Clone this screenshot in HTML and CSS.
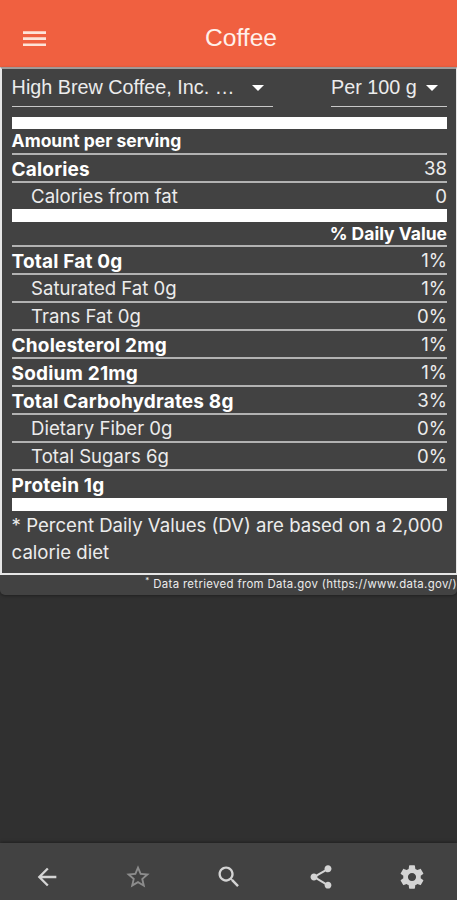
FILE: index.html
```html
<!DOCTYPE html>
<html lang="en">
<head>
<meta charset="utf-8">
<title>Coffee</title>
<link rel="stylesheet" href="styles.css">
</head>
<body>
<header class="toolbar">
  <svg class="menu" viewBox="0 0 24 16"><path d="M0 0h24v2.7H0zM0 6.3h24V9H0zM0 12.6h24v2.7H0z"/></svg>
  <h1>Coffee</h1>
</header>
<main class="card">
  <section class="label">
    <div class="selects">
      <div class="select food"><span>High Brew Coffee, Inc. …</span><i class="caret"></i></div>
      <div class="select unit"><span>Per 100 g</span><i class="caret"></i></div>
    </div>
    <div class="bar"></div>
    <div class="row small first"><b>Amount per serving</b></div>
    <div class="row"><b>Calories</b><span>38</span></div>
    <div class="row sub fat"><span>Calories from fat</span><span>0</span></div>
    <div class="bar second"></div>
    <div class="row small daily"><b>% Daily Value</b></div>
    <div class="row"><b>Total Fat 0g</b><span>1%</span></div>
    <div class="row sub"><span>Saturated Fat 0g</span><span>1%</span></div>
    <div class="row sub"><span>Trans Fat 0g</span><span>0%</span></div>
    <div class="row"><b>Cholesterol 2mg</b><span>1%</span></div>
    <div class="row"><b>Sodium 21mg</b><span>1%</span></div>
    <div class="row"><b>Total Carbohydrates 8g</b><span>3%</span></div>
    <div class="row sub"><span>Dietary Fiber 0g</span><span>0%</span></div>
    <div class="row sub"><span>Total Sugars 6g</span><span>0%</span></div>
    <div class="row last"><b>Protein 1g</b></div>
    <div class="bar second"></div>
    <p class="note">* Percent Daily Values (DV) are based on a 2,000 calorie diet</p>
  </section>
  <p class="source"><sup>*</sup> Data retrieved from Data.gov (https://www.data.gov/)</p>
</main>
<nav class="tabs">
  <svg viewBox="0 0 24 24"><path d="M20 11H7.83l5.59-5.59L12 4l-8 8 8 8 1.41-1.41L7.83 13H20v-2z"/></svg>
  <svg class="dim" viewBox="0 0 24 24"><path d="M22 9.24l-7.19-.62L12 2 9.19 8.63 2 9.24l5.46 4.73L5.82 21 12 17.27 18.18 21l-1.63-7.03L22 9.24zM12 15.4l-3.76 2.27 1-4.28-3.32-2.88 4.38-.38L12 6.1l1.71 4.04 4.38.38-3.32 2.88 1 4.28L12 15.4z"/></svg>
  <svg viewBox="0 0 24 24"><path d="M15.5 14h-.79l-.28-.27C15.41 12.59 16 11.11 16 9.5 16 5.91 13.09 3 9.5 3S3 5.91 3 9.5 5.91 16 9.5 16c1.61 0 3.09-.59 4.23-1.57l.27.28v.79l5 4.99L20.49 19l-4.99-5zm-6 0C7.01 14 5 11.99 5 9.5S7.01 5 9.5 5 14 7.01 14 9.5 11.99 14 9.5 14z"/></svg>
  <svg viewBox="0 0 24 24"><path d="M18 16.08c-.76 0-1.44.3-1.96.77L8.91 12.7c.05-.23.09-.46.09-.7s-.04-.47-.09-.7l7.05-4.11c.54.5 1.25.81 2.04.81 1.66 0 3-1.34 3-3s-1.34-3-3-3-3 1.34-3 3c0 .24.04.47.09.7L8.04 9.81C7.5 9.31 6.79 9 6 9c-1.66 0-3 1.34-3 3s1.34 3 3 3c.79 0 1.5-.31 2.04-.81l7.12 4.16c-.05.21-.08.43-.08.65 0 1.61 1.31 2.92 2.92 2.92s2.92-1.31 2.92-2.92-1.31-2.92-2.92-2.92z"/></svg>
  <svg viewBox="0 0 24 24"><path d="M19.43 12.98c.04-.32.07-.64.07-.98s-.03-.66-.07-.98l2.11-1.65c.19-.15.24-.42.12-.64l-2-3.46c-.12-.22-.39-.3-.61-.22l-2.49 1c-.52-.4-1.08-.73-1.69-.98l-.38-2.65C14.46 2.18 14.25 2 14 2h-4c-.25 0-.46.18-.49.42l-.38 2.65c-.61.25-1.17.59-1.69.98l-2.49-1c-.23-.09-.49 0-.61.22l-2 3.46c-.13.22-.07.49.12.64l2.11 1.65c-.04.32-.07.65-.07.98s.03.66.07.98l-2.11 1.65c-.19.15-.24.42-.12.64l2 3.46c.12.22.39.3.61.22l2.49-1c.52.4 1.08.73 1.69.98l.38 2.65c.03.24.24.42.49.42h4c.25 0 .46-.18.49-.42l.38-2.65c.61-.25 1.17-.59 1.69-.98l2.49 1c.23.09.49 0 .61-.22l2-3.46c.12-.22.07-.49-.12-.64l-2.11-1.65zM12 15.5c-1.93 0-3.5-1.57-3.5-3.5s1.57-3.5 3.5-3.5 3.5 1.57 3.5 3.5-1.57 3.5-3.5 3.5z"/></svg>
</nav>
</body>
</html>
```
FILE: styles.css
```css
* { box-sizing: border-box; }
html, body { height: 100%; }
body {
  margin: 0;
  display: flex;
  flex-direction: column;
  background: #303030;
  color: #ececec;
  font-family: Inter, sans-serif;
  overflow: hidden;
}
.toolbar {
  height: 67px;
  flex: none;
  display: grid;
  grid-template-columns: 70px 1fr 45px;
  align-items: center;
  padding-top: 9px;
  background: #f06040;
}
.menu { width: 23px; height: 16px; margin: 1px 0 0 23px; fill: #fde3d8; }
h1 {
  margin: 0;
  text-align: center;
  font: 400 24.6px/28px "Liberation Sans", sans-serif;
  color: #fff0ea;
}
.card {
  height: 528px;
  flex: none;
  background: #424242;
  border-radius: 0 0 5px 5px;
  box-shadow: 0 1px 3px rgba(0, 0, 0, .35);
}
.label {
  height: 508px;
  border: 2px solid #e6e6e6;
  border-top-color: #a09a98;
  border-right-width: 1px;
  padding: 0 9px 0 9.6px;
}
.selects { display: flex; justify-content: space-between; height: 38px; margin-bottom: 10px; }
.select {
  display: flex;
  justify-content: space-between;
  border-bottom: 1px solid #c8c8c8;
  padding-right: 9px;
  font: 19.8px/37px "Liberation Sans", sans-serif;
  white-space: nowrap;
}
.food { width: 261px; }
.unit { width: 116px; }
.caret {
  margin-top: 16px;
  border: 6px solid transparent;
  border-top-color: #fff;
  border-bottom: 0;
  height: 6px;
}
.bar { height: 12px; background: #fff; }
.bar.second { height: 13px; }
.row {
  display: flex;
  justify-content: space-between;
  height: 28px;
  border-bottom: 2px solid #b2b2b2;
  font-size: 18.6px;
  line-height: 27px;
}
.row b { font-weight: 700; color: #fff; font-size: 19px; line-height: 29px; letter-spacing: .18px; }
.sub { padding-left: 19.5px; }
.row.small { height: 25px; line-height: 25px; }
.row.small b { font-size: 17.5px; line-height: 24px; letter-spacing: 0; }
.row.first { height: 26px; }
.row.fat { height: 26px; border-bottom: 0; }
.row.last { height: 27px; border-bottom: 0; }
.row.daily { justify-content: flex-end; }
.note { margin: 0; font-size: 18.6px; line-height: 27px; padding-top: 1px; }
.source {
  margin: 0;
  text-align: right;
  font-size: 11.4px;
  line-height: 18px;
  letter-spacing: .34px;
  white-space: nowrap;
}
.source sup { font-size: 8px; line-height: 0; }
.tabs {
  height: 57px;
  flex: none;
  margin-top: auto;
  padding: 11px 0 0 1px;
  display: grid;
  grid-template-columns: repeat(5, 91.4px);
  justify-items: center;
  align-items: center;
  background: #424242;
  box-shadow: 0 -1px 3px rgba(0, 0, 0, .35);
}
.tabs svg { width: 28px; height: 28px; fill: #d4d4d4; }
.tabs .dim { fill: #8c8c8c; }
```
